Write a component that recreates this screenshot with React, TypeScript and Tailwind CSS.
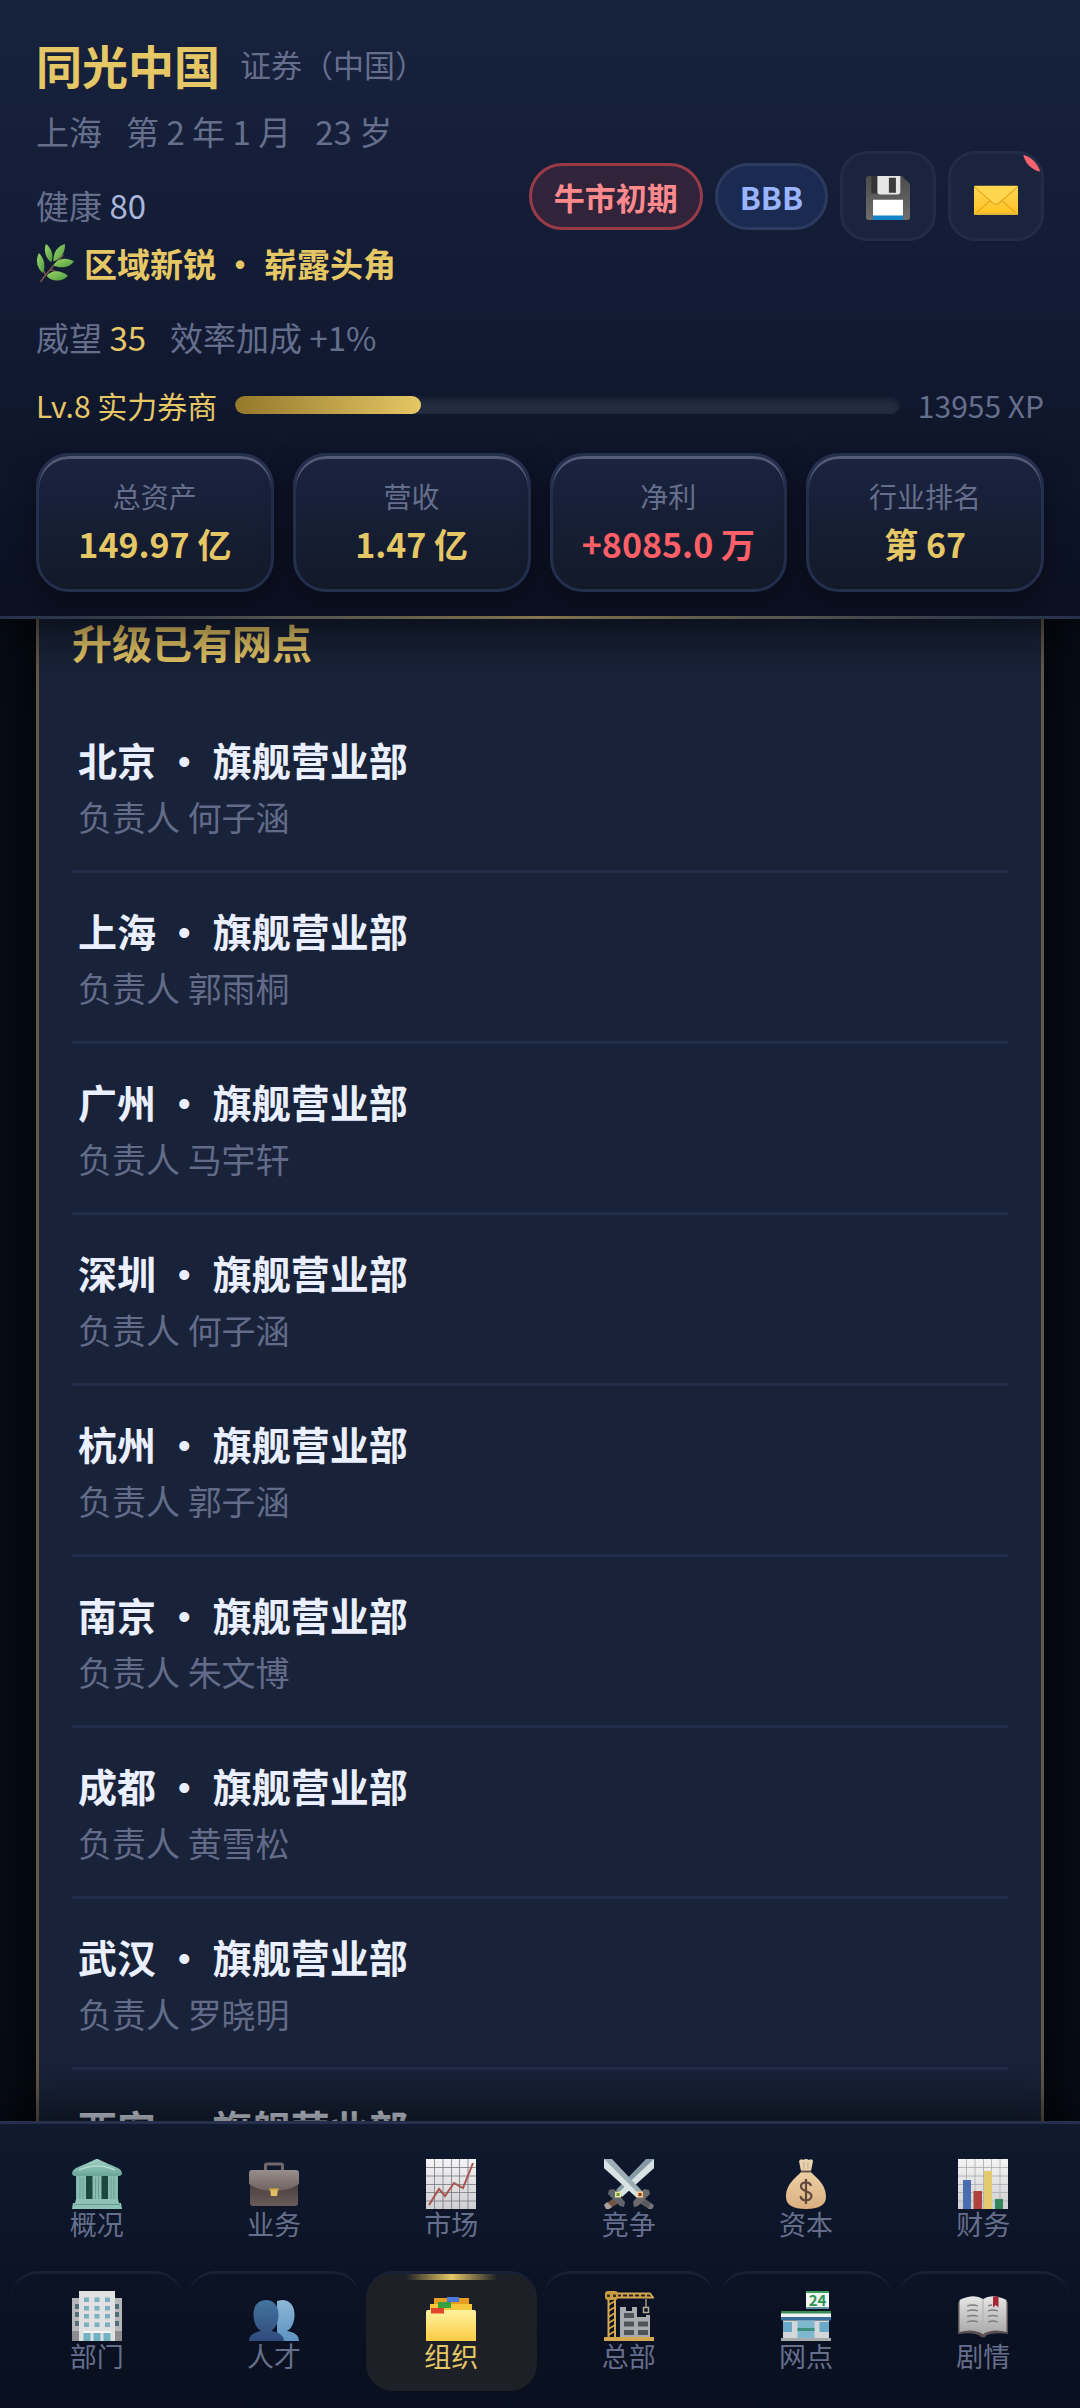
import type { ReactNode } from "react";

const branches = [
  { city: "北京", manager: "何子涵" },
  { city: "上海", manager: "郭雨桐" },
  { city: "广州", manager: "马宇轩" },
  { city: "深圳", manager: "何子涵" },
  { city: "杭州", manager: "郭子涵" },
  { city: "南京", manager: "朱文博" },
  { city: "成都", manager: "黄雪松" },
  { city: "武汉", manager: "罗晓明" },
  { city: "西安", manager: "" },
];

const stats = [
  { label: "总资产", value: "149.97 亿", tone: "text-[#e6c766]" },
  { label: "营收", value: "1.47 亿", tone: "text-[#e6c766]" },
  { label: "净利", value: "+8085.0 万", tone: "text-[#ff5f66]" },
  { label: "行业排名", value: "第 67", tone: "text-[#e6c766]" },
];

const level = { name: "Lv.8 实力券商", xp: 13955, progress: 28 };

/* Icons, all on a 50 × 50 grid */

function Icon({ className = "size-[50px]", children }: { className?: string; children: ReactNode }) {
  return (
    <svg viewBox="0 0 50 50" className={className} aria-hidden="true">
      {children}
    </svg>
  );
}

function LeafIcon() {
  return (
    <Icon className="size-[38px]">
      <defs>
        <linearGradient id="leaf" x1="0" y1="0" x2="1" y2="1">
          <stop offset="0" stopColor="#9ad66c" />
          <stop offset="1" stopColor="#4f9a3c" />
        </linearGradient>
      </defs>
      <path d="M6 50C12 40 22 30 36 14M18 34C24 34 28 38 30 40M12 40C11 36 8 32 7 30" fill="none" stroke="#7a5a48" strokeWidth="2" />
      <g fill="url(#leaf)">
        <path d="M20 24C12 18 10 8 13 0C20 5 24 15 20 24Z" />
        <path d="M23 23C22 12 28 3 38 0C39 10 33 20 23 23Z" />
        <path d="M23 28C28 19 40 17 50 23C44 31 32 33 23 28Z" />
        <path d="M9 38C1 32-1 20 4 12C11 19 13 29 9 38Z" />
        <path d="M14 42C20 34 33 34 42 42C34 50 21 50 14 42Z" />
      </g>
    </Icon>
  );
}

function SaveIcon() {
  return (
    <Icon className="size-11">
      <defs>
        <linearGradient id="disk" x1="0" y1="0" x2="0" y2="1">
          <stop offset="0" stopColor="#4b4b4b" />
          <stop offset="1" stopColor="#6e6e6e" />
        </linearGradient>
      </defs>
      <path d="M3 0H41L50 9V47A3 3 0 0 1 47 50H3A3 3 0 0 1 0 47V3A3 3 0 0 1 3 0Z" fill="url(#disk)" />
      <path d="M6 0H13V20H6Z" fill="#353535" />
      <path d="M13 0H39V18A3 3 0 0 1 36 21H16A3 3 0 0 1 13 18Z" fill="#e6e6e6" />
      <path d="M26 2H34V19H26Z" fill="#3b3b3b" />
      <path d="M8 27H42V46H8Z" fill="#fff" />
      <path d="M8 45H42V50H8Z" fill="#1484c8" />
    </Icon>
  );
}

function MailIcon() {
  return (
    <Icon className="size-11">
      <defs>
        <linearGradient id="mail" x1="0" y1="0" x2="0" y2="1">
          <stop offset="0" stopColor="#ffd95a" />
          <stop offset="1" stopColor="#ffc21f" />
        </linearGradient>
      </defs>
      <rect x="0" y="11" width="50" height="33" rx="1" fill="url(#mail)" />
      <path d="M1 43L20 27M49 43L30 27" stroke="#e0a51c" strokeWidth="1.2" />
      <path d="M0 12L22 31Q25 33.500 28 31L50 12" fill="#ffd64d" stroke="#dfa41c" strokeWidth="1.2" />
      <path d="M0 43H50" stroke="#e9b93f" strokeWidth="2" />
    </Icon>
  );
}

function BankIcon() {
  return (
    <Icon>
      <defs>
        <linearGradient id="bankRoof" x1="0" y1="0" x2="0" y2="1">
          <stop offset="0" stopColor="#a3d0c5" />
          <stop offset="1" stopColor="#6aa699" />
        </linearGradient>
      </defs>
      <path d="M4 17H46V44H4Z" fill="#7fb5a8" />
      <path d="M14 17H21V40Q17.500 47 14 40ZM29 17H36V40Q32.500 47 29 40Z" fill="#1c463e" />
      <path d="M5 16H14V43H5ZM20.500 16H29.500V43H20.500ZM36 16H45V43H36Z" fill="#8abdb1" />
      <path d="M8 18V42M11 18V42M23.500 18V42M26.500 18V42M39 18V42M42 18V42" stroke="#6b9f94" strokeWidth="1" />
      <path d="M4 40H46L47 44H3ZM1 44H49L50 50H0Z" fill="#8fc2b6" />
      <path d="M2 45.500H48" stroke="#669b8f" />
      <path d="M25 0C27 0 29 2 46 9Q50 11 50 15L48 17H2L0 15Q0 11 4 9C21 2 23 0 25 0Z" fill="url(#bankRoof)" />
      <path d="M7 11Q25 3 43 11" fill="none" stroke="#b4dad1" strokeWidth="1.500" />
    </Icon>
  );
}

function BriefcaseIcon() {
  return (
    <Icon>
      <defs>
        <linearGradient id="caseFlap" x1="0" y1="0" x2="0" y2="1">
          <stop offset="0" stopColor="#978d8a" />
          <stop offset="1" stopColor="#6f6361" />
        </linearGradient>
        <linearGradient id="caseBody" x1="0" y1="0" x2="0" y2="1">
          <stop offset="0" stopColor="#43393a" />
          <stop offset="1" stopColor="#695b59" />
        </linearGradient>
      </defs>
      <path d="M16.500 12V6.500Q16.500 5 18 5H32Q33.500 5 33.500 6.500V12" fill="none" stroke="#72686d" strokeWidth="3" />
      <path d="M1 20H49V44Q49 47 46 47H4Q1 47 1 44Z" fill="url(#caseBody)" />
      <path d="M0 14Q0 11 3 11H47Q50 11 50 14V25Q40 32 25 32T0 25Z" fill="url(#caseFlap)" />
      <path d="M21 30H29L28 37H22Z" fill="#e2bd62" />
      <path d="M20 30H30" stroke="#c69b45" strokeWidth="1.500" />
    </Icon>
  );
}

function ChartPaper() {
  return (
    <>
      <defs>
        <linearGradient id="paper" x1="0" y1="0" x2="0" y2="1">
          <stop offset="0" stopColor="#f4f4f5" />
          <stop offset="1" stopColor="#cfcfd1" />
        </linearGradient>
      </defs>
      <rect width="50" height="50" fill="url(#paper)" />
    </>
  );
}

function LineChartIcon() {
  return (
    <Icon>
      <ChartPaper />
      <path d="M8.500 0V50M17 0V50M25.500 0V50M33.500 0V50M42 0V50M0 8.500H50M0 17H50M0 25.500H50M0 33.500H50M0 42H50" stroke="#77797f" strokeWidth="0.800" />
      <path d="M3 46L13 30L19 37L28 24L37 29L47 4" fill="none" stroke="#a85550" strokeWidth="2" />
    </Icon>
  );
}

function BarChartIcon() {
  return (
    <Icon>
      <ChartPaper />
      <path d="M8.500 0V50M17 0V50M25.500 0V50M33.500 0V50M42 0V50M0 8.500H50M0 17H50M0 25.500H50M0 33.500H50M0 42H50" stroke="#a9abb0" strokeWidth="0.800" />
      <path d="M5 21H13V50H5Z" fill="#4a6db0" />
      <path d="M15.500 32H24V50H15.500Z" fill="#b0413f" />
      <path d="M26 12H34V50H26Z" fill="#e2ca6c" />
      <path d="M37 40H45V50H37Z" fill="#32855a" />
    </Icon>
  );
}

function SwordsIcon() {
  return (
    <Icon>
      <path d="M50 0H42L12 31L18 37L50 9Z" fill="#869aa5" />
      <path d="M50 0V9L18 38L14 34Z" fill="#d7e2e3" />
      <path d="M13 37L18 42L5 50L0 46Z" fill="#765442" />
      <path d="M0 46L3 43L8 48L5 50H2Z" fill="#a7a19f" />
      <path d="M5 31L10 30L21 43L20 48L16 47L4 35Z" fill="#61666e" />
      <path d="M0 0H8L39 33L33 38L0 9Z" fill="#9badb5" />
      <path d="M0 0L36 36L33 39L0 9Z" fill="#d9e3e4" />
      <path d="M37 37L32 42L45 50L50 46Z" fill="#5c5a60" />
      <path d="M47 44L50 47L48 50H44Z" fill="#77757b" />
      <path d="M45 31L40 30L29 43L30 48L34 47L46 35Z" fill="#6c6a6d" />
      <rect x="11" y="32.500" width="6" height="6" fill="#e3e69a" />
      <rect x="12.500" y="34" width="3" height="3" fill="#6f9b3e" />
      <rect x="33" y="32.500" width="6" height="6" fill="#f0cf87" />
      <rect x="34.500" y="34" width="3" height="3" fill="#a02d20" />
    </Icon>
  );
}

function MoneyBagIcon() {
  return (
    <Icon>
      <defs>
        <linearGradient id="bag" x1="0" y1="0" x2="0" y2="1">
          <stop offset="0" stopColor="#eccfa4" />
          <stop offset="1" stopColor="#dcaf80" />
        </linearGradient>
      </defs>
      <path d="M20 13C16 18 5 24 5 38C5 46 12 50 25 50S45 46 45 38C45 24 34 18 30 13Z" fill="url(#bag)" />
      <path d="M20 12L18 2Q20-1 22 1Q25-1 28 1Q31-1 32 2L30 12Z" fill="#ead3b3" />
      <path d="M23 3V10M27 3V10" stroke="#c4a27b" />
      <path d="M20 12.500H30" stroke="#6a5342" strokeWidth="2" />
      <path d="M25 20V45M30 27C29 22 20 22 20 27.500C20 33 30.500 31.500 30.500 37C30.500 42.500 20.500 43 19.500 37" fill="none" stroke="#5f4a3c" strokeWidth="2.200" />
    </Icon>
  );
}

function OfficeIcon() {
  return (
    <Icon>
      <path d="M0 7H50V50H0Z" fill="#b6b7b9" />
      <path d="M0 40H50V50H0Z" fill="#8d8d8f" />
      <path d="M3 13H7V18H3ZM3 21H7V26H3ZM3 30H7V35H3ZM43 13H47V18H43ZM43 21H47V26H43ZM43 30H47V35H43Z" fill="#52707c" />
      <path d="M7 0H43V50H7Z" fill="#e0e0e1" />
      <path d="M12 6.500H17V11H12ZM22.500 6.500H27.500V11H22.500ZM33 6.500H38V11H33ZM12 15H17V19.500H12ZM22.500 15H27.500V19.500H22.500ZM33 15H38V19.500H33ZM12 23H17V27.500H12ZM22.500 23H27.500V27.500H22.500ZM33 23H38V27.500H33ZM12 31.500H17V36H12ZM22.500 31.500H27.500V36H22.500ZM33 31.500H38V36H33Z" fill="#78b1c0" />
      <path d="M11 40H39V42H11Z" fill="#f3f3f3" />
      <path d="M11.500 42H18.500V50H11.500ZM21.500 42H28.500V50H21.500ZM31.500 42H38.500V50H31.500Z" fill="#6fb3c3" />
    </Icon>
  );
}

function PeopleIcon() {
  return (
    <Icon>
      <defs>
        <linearGradient id="personBack" x1="0" y1="0" x2="0" y2="1">
          <stop offset="0" stopColor="#8db6d6" />
          <stop offset="1" stopColor="#5d94c2" />
        </linearGradient>
        <linearGradient id="personFront" x1="0" y1="0" x2="0" y2="1">
          <stop offset="0" stopColor="#44749f" />
          <stop offset="1" stopColor="#2f4a7d" />
        </linearGradient>
      </defs>
      <path d="M33 9C41 9 46 15 45.500 25C45 33 42 38 38 40C45 41 50 44 50 50H28V10Z" fill="url(#personBack)" />
      <path d="M17 9C25 9 30 15 29.500 25C29 33 26 37 22.500 40C29 41 35 44 35 50H0C0 44 6 41 12 40C8 37 5 33 4.500 25C4 15 9 9 17 9Z" fill="url(#personFront)" />
    </Icon>
  );
}

function FolderIcon() {
  return (
    <Icon>
      <defs>
        <linearGradient id="folder" x1="0" y1="0" x2="0" y2="1">
          <stop offset="0" stopColor="#fff3a0" />
          <stop offset="1" stopColor="#fccb44" />
        </linearGradient>
      </defs>
      <path d="M8 7H43V20H8Z" fill="#e79c22" />
      <path d="M21 6H33V11H21Z" fill="#4a79e0" />
      <path d="M4 13H46V22H4Z" fill="#f5c83c" />
      <path d="M12 11H25V17H12Z" fill="#36a23e" />
      <path d="M0 21Q0 19 2 19H48Q50 19 50 21V50H0Z" fill="url(#folder)" />
      <path d="M5 17H18V22.500H5Z" fill="#e2452c" />
    </Icon>
  );
}

function CraneIcon() {
  return (
    <Icon>
      <path d="M16 16H22V20H28V16H33V26H42V24H46V46H16Z" fill="#a9acaf" />
      <path d="M20 22H30V27H20ZM20 30.500H30V35.500H20ZM20 39H30V44H20ZM34 30.500H44V35.500H34ZM34 39H44V44H34Z" fill="#4e5457" />
      <path d="M3 2.500H46L49 6.500H3Z" fill="#2b241c" stroke="#d3a850" strokeWidth="1.800" />
      <path d="M18 2V7M24 2V7M30 2V7M36 2V7M42 2V7" stroke="#d3a850" strokeWidth="1.800" />
      <path d="M4.500 8V47M11 8V47" stroke="#d3a850" strokeWidth="2" />
      <path d="M4.500 14L11 10M4.500 20L11 16M4.500 26L11 22M4.500 32L11 28M4.500 38L11 34M4.500 44L11 40" stroke="#d3a850" strokeWidth="1.600" />
      <rect x="1" y="0" width="13" height="9" rx="3" fill="#c99b42" />
      <rect x="3" y="3.500" width="3" height="2.500" fill="#3c3020" />
      <rect x="9" y="3.500" width="3" height="2.500" fill="#3c3020" />
      <path d="M42 8V16" stroke="#9d9889" strokeWidth="1.500" />
      <rect x="39.500" y="16.500" width="5" height="5" fill="none" stroke="#b4ac98" strokeWidth="1.500" />
      <path d="M0 46H50V50H0Z" fill="#d3a850" />
    </Icon>
  );
}

function StoreIcon() {
  return (
    <Icon>
      <rect x="25" y="0" width="23" height="18" rx="2" fill="#f2f6f3" />
      <path d="M27 0H46Q48 0 48 2H25Q25 0 27 0Z" fill="#3b9e5d" />
      <path d="M25 16H48L46 18H27Z" fill="#5c91a0" />
      <path d="M0 20H50V24H0Z" fill="#3b8b58" />
      <path d="M0 22.500H50V27H0Z" fill="#f2f5f5" />
      <path d="M0 26H50V29.500H0Z" fill="#3a6f9b" />
      <path d="M2 29.500H48V48H2Z" fill="#d3d7da" />
      <path d="M2 31H11V41H2ZM38.500 31H48V41H38.500Z" fill="#6ba9c9" />
      <path d="M16.500 29.500H33.500V47H16.500Z" fill="#7db8cf" />
      <path d="M16.500 37H33.500V40H16.500Z" fill="#3f8f80" />
      <path d="M0 47H50V50H0Z" fill="#a7abad" />
      <text x="36.500" y="14.500" textAnchor="middle" fontSize="15" fontWeight="700" fill="#2f9552">
        24
      </text>
    </Icon>
  );
}

function BookIcon() {
  return (
    <Icon>
      <defs>
        <linearGradient id="page" x1="0" y1="0" x2="0" y2="1">
          <stop offset="0" stopColor="#e6e6e6" />
          <stop offset="1" stopColor="#a9a8a8" />
        </linearGradient>
      </defs>
      <path d="M0 11V43Q14 41 21 44Q25 49 29 44Q36 41 50 43V11Z" fill="#5b5052" />
      <path d="M1.500 9Q16 2 25 8Q34 2 48.500 9V41Q35 37 25 43Q15 37 1.500 41Z" fill="url(#page)" />
      <path d="M25 8V43" stroke="#b5b4b5" strokeWidth="1.200" />
      <path d="M9 15Q15 13 20 15M9 20Q15 18 20 20M9 25.500Q15 23.500 20 25.500M9 31Q15 29 20 31M30 15Q32 14 34 14M30 20Q35 18 40 20M30 25.500Q35 23.500 40 25.500M30 31Q35 29 40 31" fill="none" stroke="#7d7c7e" strokeWidth="1.300" />
      <path d="M35 5.500H40.500V16.500L37.750 14L35 16.500Z" fill="#a82638" />
    </Icon>
  );
}

const tabs = [
  { icon: <BankIcon />, label: "概况" },
  { icon: <BriefcaseIcon />, label: "业务" },
  { icon: <LineChartIcon />, label: "市场" },
  { icon: <SwordsIcon />, label: "竞争" },
  { icon: <MoneyBagIcon />, label: "资本" },
  { icon: <BarChartIcon />, label: "财务" },
];

const subTabs = [
  { icon: <OfficeIcon />, label: "部门" },
  { icon: <PeopleIcon />, label: "人才" },
  { icon: <FolderIcon />, label: "组织", active: true },
  { icon: <CraneIcon />, label: "总部" },
  { icon: <StoreIcon />, label: "网点" },
  { icon: <BookIcon />, label: "剧情" },
];

function IconButton({ label, badge, children }: { label: string; badge?: boolean; children: ReactNode }) {
  return (
    <button
      type="button"
      aria-label={label}
      className="relative flex h-[90px] w-24 items-center justify-center overflow-hidden rounded-[27px] border-[3px] border-[#222c48] bg-[#1a243c] pt-1"
    >
      {children}
      {badge && <span className="absolute -top-6 -right-6 size-[42px] rounded-full bg-[#f9646e]" />}
    </button>
  );
}

function Header() {
  return (
    <header className="relative z-10 shrink-0 bg-linear-to-b from-[#17223d] via-[#121b33] to-[#0b1022] shadow-[0_12px_50px_rgba(0,0,0,0.65)]">
      <div className="px-9 pt-[30px] pb-6">
        <div className="flex items-center justify-between text-[33px] leading-[50px] text-[#656f8c]">
          <div>
            <h1 className="flex items-center gap-5 leading-[68px]">
              <span className="text-[46px] font-bold text-[#e6c766]">同光中国</span>
              <span className="text-[31px] font-normal">证券（中国）</span>
            </h1>
            <p className="mt-2 flex gap-6">
              <span>上海</span>
              <span>第 2 年 1 月</span>
              <span>23 岁</span>
            </p>
            <p className="mt-6">
              健康 <span className="text-[#a9b6da]">80</span>
            </p>
            <p className="mt-2 flex items-center gap-2.5 font-bold text-[#e6c766]">
              <LeafIcon />
              区域新锐 · 崭露头角
            </p>
            <p className="mt-6 flex gap-6">
              <span>
                威望 <span className="text-[#e6c766]">35</span>
              </span>
              <span>效率加成 +1%</span>
            </p>
          </div>

          <div className="flex items-center gap-3">
            <span className="rounded-full border-[3px] border-[#993a47] bg-[#30233a] px-[22px] text-[31px] leading-[61px] font-bold text-[#ff8a8d]">
              牛市初期
            </span>
            <span className="rounded-full border-[3px] border-[#2c3a60] bg-[#1b2a50] px-[22px] text-[31px] leading-[61px] font-bold text-[#9bb4ff]">
              BBB
            </span>
            <IconButton label="保存">
              <SaveIcon />
            </IconButton>
            <IconButton label="邮件" badge>
              <MailIcon />
            </IconButton>
          </div>
        </div>

        {/* Level progress */}
        <div className="mt-[21px] flex items-center gap-[18px] text-[30px] leading-[44px]">
          <span className="text-[#e6c766]">{level.name}</span>
          <div className="h-[18px] flex-1 overflow-hidden rounded-full bg-[#232b3f] shadow-[inset_0_3px_5px_#101a30]">
            <div
              className="h-full rounded-full bg-linear-to-r from-[#94792a] to-[#e6c766]"
              style={{ width: `${level.progress}%` }}
            />
          </div>
          <span className="text-[#656f8c]">{level.xp} XP</span>
        </div>

        {/* Key figures */}
        <dl className="mt-[26px] grid grid-cols-4 gap-[19px] text-center">
          {stats.map((stat) => (
            <div
              key={stat.label}
              className="rounded-[33px] border-[3px] border-[#232f4d] bg-linear-to-b from-[#1a2440] to-[#121929] pt-5 pb-[17px] shadow-[inset_0_3px_0_#525c75,0_8px_30px_rgba(0,0,0,0.4)]"
            >
              <dt className="text-[28px] leading-[40px] text-[#656f8c]">{stat.label}</dt>
              <dd className={`text-[34px] leading-[56px] font-bold ${stat.tone}`}>{stat.value}</dd>
            </div>
          ))}
        </dl>
      </div>
      <div className="h-[3px] bg-linear-to-r from-[#25304d] via-[#85764d] to-[#25304d]" />
    </header>
  );
}

function BranchPanel() {
  return (
    <main className="min-h-0 flex-1 overflow-hidden px-9">
      <section className="border-x-[3px] border-[#615a48] bg-[#182239] px-[33px] shadow-[0_0_40px_8px_#020408]">
        <h2 className="pb-[37px] text-[40px] leading-[46px] font-bold text-[#e6c766]">升级已有网点</h2>
        <ul>
          {branches.map((branch) => (
            <li key={branch.city} className="border-b-[3px] border-[#222d4a] px-1.5 pt-[27px] pb-[25px]">
              <h3 className="text-[39px] leading-[60px] font-bold text-[#eaf0ff]">{branch.city} · 旗舰营业部</h3>
              <p className="text-[34px] leading-[56px] text-[#626c88]">负责人 {branch.manager}</p>
            </li>
          ))}
        </ul>
      </section>
    </main>
  );
}

function TabButton({ icon, label, active, raised }: { icon: ReactNode; label: string; active?: boolean; raised?: boolean }) {
  return (
    <button
      type="button"
      aria-current={active ? "page" : undefined}
      className={`relative flex h-[120px] flex-col items-center rounded-[27px] ${
        active ? "bg-[#1d2127] text-[#e6c766]" : "text-[#656f8c]"
      } ${raised ? "border-t-[3px] border-[#192036] pt-[17px]" : "pt-5"}`}
    >
      {active && (
        <span className="absolute inset-x-10 top-0 h-1.5 bg-linear-to-r from-transparent via-[#e6c766] to-transparent" />
      )}
      {icon}
      <span className="text-[27px] leading-[30px]">{label}</span>
    </button>
  );
}

function BottomNav() {
  return (
    <nav className="relative z-10 grid shrink-0 grid-cols-6 gap-x-1.5 gap-y-3 border-t-[3px] border-[#25304d] bg-linear-to-b from-[#0f1a2f] via-[#0c1326] to-[#090f1e] px-[11px] pt-[15px] pb-[17px] shadow-[0_-12px_50px_rgba(0,0,0,0.65)]">
      {tabs.map((tab) => (
        <TabButton key={tab.label} {...tab} />
      ))}
      {subTabs.map((tab) => (
        <TabButton key={tab.label} {...tab} raised />
      ))}
    </nav>
  );
}

export default function App() {
  return (
    <div lang="zh-CN" className="flex h-screen flex-col overflow-hidden bg-[#080d17] font-['Noto_Sans_CJK_SC',sans-serif]">
      <Header />
      <BranchPanel />
      <BottomNav />
    </div>
  );
}
